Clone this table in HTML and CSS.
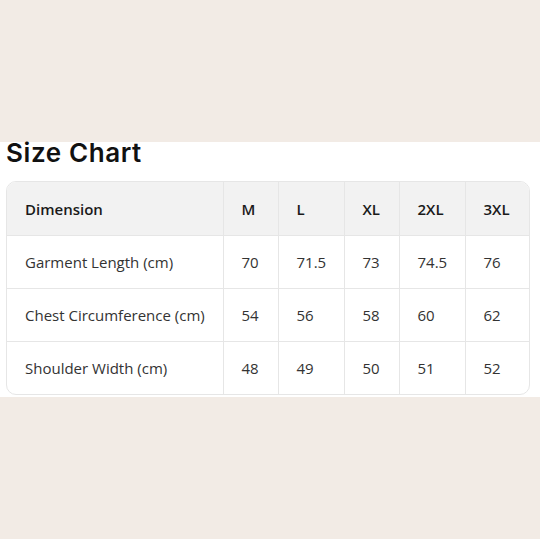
FILE: index.html
```html
<!DOCTYPE html>
<html>
<head>
<meta charset="utf-8">
<link rel="stylesheet" href="styles.css">
</head>
<body>
<div class="page">
  <div class="spacer"></div>
  <section class="chart">
    <h2 class="title">Size Chart</h2>
    <div class="table-wrap">
      <table class="size-table">
        <colgroup>
          <col class="c-dim"><col class="c-m"><col class="c-l"><col class="c-xl"><col class="c-2xl"><col class="c-3xl">
        </colgroup>
        <thead>
          <tr><th>Dimension</th><th>M</th><th>L</th><th>XL</th><th>2XL</th><th>3XL</th></tr>
        </thead>
        <tbody>
          <tr><td>Garment Length (cm)</td><td>70</td><td>71.5</td><td>73</td><td>74.5</td><td>76</td></tr>
          <tr><td>Chest Circumference (cm)</td><td>54</td><td>56</td><td>58</td><td>60</td><td>62</td></tr>
          <tr><td>Shoulder Width (cm)</td><td>48</td><td>49</td><td>50</td><td>51</td><td>52</td></tr>
        </tbody>
      </table>
    </div>
  </section>
</div>
</body>
</html>
```
FILE: styles.css
```css
html, body {
  margin: 0;
  padding: 0;
  background: #f2ebe5;
}
.page {
  width: 540px;
  height: 539px;
  display: flex;
  flex-direction: column;
}
.spacer {
  height: 142px;
}
.chart {
  background: #ffffff;
  padding: 0 10px 2px 6px;
}
.title {
  margin: 0;
  font-family: "Inter", "Liberation Sans", sans-serif;
  font-weight: 600;
  font-size: 26px;
  line-height: 21px;
  height: 39px;
  color: #111;
  letter-spacing: 0.6px;
}
.table-wrap {
  border: 1px solid #e6e6e6;
  border-radius: 10px;
  overflow: hidden;
}
.size-table {
  width: 100%;
  border-collapse: collapse;
  table-layout: fixed;
  font-family: "Open Sans", "Noto Sans", sans-serif;
  font-size: 15px;
  color: #333;
}
.c-dim { width: 216px; }
.c-m { width: 55px; }
.c-l { width: 66px; }
.c-xl { width: 55px; }
.c-2xl { width: 66px; }
.c-3xl { width: 64px; }
.size-table th,
.size-table td {
  text-align: left;
  padding: 0 0 0 18px;
  border-right: 1px solid #e6e6e6;
  border-bottom: 1px solid #e6e6e6;
  white-space: nowrap;
}
.size-table th:last-child,
.size-table td:last-child {
  border-right: none;
}
.size-table tbody tr:last-child td {
  border-bottom: none;
}
.size-table th {
  background: #f2f2f2;
  font-weight: 600;
  color: #1a1a1a;
  height: 53px;
}
.size-table td {
  height: 52px;
}
```
